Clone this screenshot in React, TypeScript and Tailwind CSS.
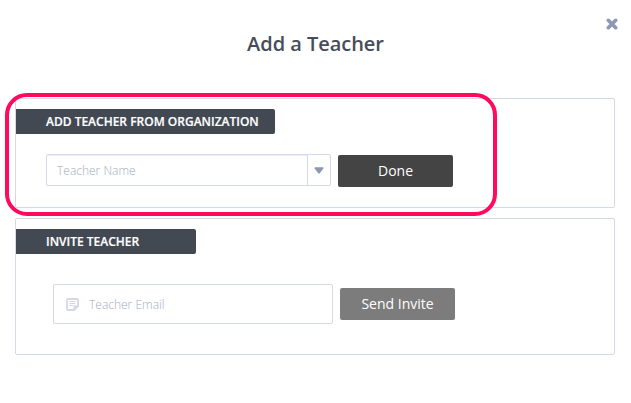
import type { ReactNode } from "react";

function CloseIcon() {
  return (
    <svg viewBox="0 0 12 12" className="size-3">
      <path d="M2.3 2.3 9.7 9.7M9.7 2.3 2.3 9.7" stroke="#8b98b5" strokeWidth="3.6" strokeLinecap="round" />
    </svg>
  );
}

function NoteIcon() {
  return (
    <svg viewBox="0 0 13 13" className="size-[13px] shrink-0" fill="none" stroke="#d3d7e7">
      <path d="M2.2 1h8.6Q12 1 12 2.2V8.2L8.2 12h-6Q1 12 1 10.8V2.2Q1 1 2.2 1Z" strokeWidth="1.8" />
      <path d="M12 8 8 12V8Z" fill="#d3d7e7" />
      <path d="M3.5 3.5h6M3.5 5.5h6M3.5 7.5h4" />
    </svg>
  );
}

function Section({ title, tagClass, className, children }: { title: string; tagClass: string; className: string; children: ReactNode }) {
  return (
    <section className={`rounded-[2px] border border-[#d5d8e6] pt-[10px] ${className}`}>
      <h2 className={`h-[25px] rounded-r-[2px] bg-[#424953] pl-[30px] text-[12px] leading-[25px] font-semibold whitespace-nowrap text-white [-webkit-text-stroke:0.2px_white] ${tagClass}`}>
        {title}
      </h2>
      {children}
    </section>
  );
}

export default function App() {
  return (
    <main className="relative h-[403px] w-[631px] overflow-hidden bg-white px-[15px] font-['Open_Sans',sans-serif]">
      <header className="h-[98px] pt-[30px]">
        <h1 className="text-center text-[20px] leading-7 font-semibold tracking-[-0.03px] text-[#464d58]">Add a Teacher</h1>
      </header>
      <button aria-label="Close" className="absolute top-[18px] left-[606px]">
        <CloseIcon />
      </button>

      <Section title="ADD TEACHER FROM ORGANIZATION" tagClass="w-[259px]" className="h-[110px] w-[600px]">
        <div className="flex gap-[7px] pt-5 pl-[30px]">
          <div className="flex h-8 w-[285px] rounded-[2px] border border-[#d5d8e6]">
            <input
              placeholder="Teacher Name"
              className="min-w-0 flex-1 pt-[2px] pl-[10px] text-[12px] font-light shadow-[inset_0_1px_1px_#eeeef2] outline-none placeholder:text-[#a3abc0]"
            />
            <button aria-label="Choose a teacher" className="flex w-[23px] items-center justify-center border-l border-[#d5d8e6] pr-px">
              <svg viewBox="0 0 10 7" className="h-[7px] w-[10px]">
                <path d="M.8.3h8.4L9.6 1.2 5.6 6.4H4.4L.4 1.2Z" fill="#8b98b5" />
              </svg>
            </button>
          </div>
          <button className="mt-px h-8 w-[115px] rounded-[2px] bg-[#444] pb-[2px] text-[14px] text-white">Done</button>
        </div>
      </Section>

      <Section title="INVITE TEACHER" tagClass="w-[180px]" className="mt-[10px] h-[137px] w-[600px]">
        <div className="flex items-center gap-[7px] pt-[30px] pl-[37px]">
          <div className="flex h-10 w-[280px] items-center gap-[10px] rounded-[2px] border border-[#d5d8e6] pl-3">
            <NoteIcon />
            <input placeholder="Teacher Email" className="min-w-0 flex-1 pt-[2px] text-[12px] font-light outline-none placeholder:text-[#a3abc0]" />
          </div>
          <button className="h-8 w-[115px] rounded-[2px] bg-[#7c7c7c] pb-[2px] text-[14px] text-white">Send Invite</button>
        </div>
      </Section>

      <div className="pointer-events-none absolute top-[93px] left-[5px] h-[123px] w-[492px] rounded-[22px] border-4 border-[#ff0a5c]" />
    </main>
  );
}
